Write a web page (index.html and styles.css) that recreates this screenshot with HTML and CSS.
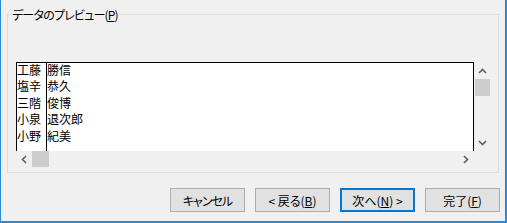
FILE: index.html
```html
<!DOCTYPE html>
<html lang="ja">
<head>
  <meta charset="UTF-8" />
  <title>テキスト ファイル ウィザード</title>
  <link rel="stylesheet" href="styles.css">
</head>
<body>
  <div class="wizard">
    <fieldset class="group">
      <legend>データのプレビュー(<u>P</u>)</legend>
      <div class="preview">
        <div class="preview-top">
          <div class="sheet">
            <div class="col first">
              <div>工藤</div>
              <div>塩辛</div>
              <div>三階</div>
              <div>小泉</div>
              <div>小野</div>
            </div>
            <div class="col second">
              <div>勝信</div>
              <div>恭久</div>
              <div>俊博</div>
              <div>退次郎</div>
              <div>紀美</div>
            </div>
          </div>
          <div class="vscroll">
            <div class="arrow">
              <svg width="9" height="6" viewBox="0 0 9 6"><polyline points="1,5 4.5,1.5 8,5" /></svg>
            </div>
            <div class="vthumb"></div>
            <div class="vtrack"></div>
            <div class="arrow">
              <svg width="9" height="6" viewBox="0 0 9 6"><polyline points="1,1 4.5,4.5 8,1" /></svg>
            </div>
          </div>
        </div>
        <div class="hscroll">
          <div class="arrow">
            <svg width="6" height="9" viewBox="0 0 6 9"><polyline points="5,1 1.5,4.5 5,8" /></svg>
          </div>
          <div class="hthumb"></div>
          <div class="htrack"></div>
          <div class="arrow">
            <svg width="6" height="9" viewBox="0 0 6 9"><polyline points="1,1 4.5,4.5 1,8" /></svg>
          </div>
          <div class="corner"></div>
        </div>
      </div>
    </fieldset>

    <div class="buttons">
      <button class="kana">キャンセル</button>
      <button>&lt;&nbsp;戻る(<u>B</u>)</button>
      <button class="default">次へ(<u>N</u>)&nbsp;&gt;</button>
      <button>完了(<u>F</u>)</button>
    </div>
  </div>
</body>
</html>
```

FILE: styles.css
```css
body {
  margin: 0;
  background-color: #f0f0f0;
  font-family: "Noto Sans CJK JP", "Noto Sans", sans-serif;
  font-size: 12px;
  color: #000;
}

.wizard {
  box-sizing: border-box;
  width: 507px;
  height: 223px;
  border-left: 1px solid #2a8ad4;
  border-right: 2px solid #2a8ad4;
  border-bottom: 2px solid #2a8ad4;
  overflow: hidden;
}

.group {
  box-sizing: border-box;
  width: 492px;
  margin: 6px 0 0 6px;
  padding: 0 0 5px 0;
  border: 1px solid #dcdcdc;
}

.group legend {
  margin-left: 3px;
  padding: 0 1px;
  line-height: 17px;
  letter-spacing: -0.8px;
  font-feature-settings: "palt";
}

.preview {
  margin: 39px 0 0 8px;
  width: 475px;
}

.preview-top {
  display: flex;
  height: 89px;
}

.sheet {
  box-sizing: border-box;
  width: 458px;
  display: flex;
  background-color: #fff;
  border: 1px solid #000;
  border-bottom: none;
}

.col {
  line-height: 16.4px;
}

.col div {
  white-space: nowrap;
}

.col > div:first-child {
  margin-top: -1px;
}

.col.first {
  width: 29px;
  border-right: 1px solid #000;
}

.col.second {
  flex: 1;
}

.vscroll {
  width: 17px;
  display: flex;
  flex-direction: column;
}

.vscroll .arrow {
  height: 17px;
}

.vthumb {
  height: 17px;
  margin: 0 1px;
  background-color: #cdcdcd;
}

.vtrack {
  flex: 1;
}

.hscroll {
  display: flex;
  height: 16px;
}

.hscroll .arrow {
  width: 16px;
}

.hthumb {
  width: 17px;
  background-color: #cdcdcd;
}

.htrack {
  flex: 1;
}

.corner {
  width: 17px;
}

.arrow {
  display: flex;
  justify-content: center;
  align-items: center;
}

.arrow svg polyline {
  fill: none;
  stroke: #606060;
  stroke-width: 1.6;
}

.buttons {
  display: flex;
  justify-content: flex-end;
  gap: 10px;
  margin-top: 15px;
  padding-right: 5px;
}

button {
  box-sizing: border-box;
  width: 75px;
  height: 24px;
  padding: 0;
  border: 1px solid #adadad;
  background-color: #e1e1e1;
  font-family: "Noto Sans CJK JP", "Noto Sans", sans-serif;
  font-size: 12px;
  color: #000;
  font-feature-settings: "palt";
}

button.kana {
  letter-spacing: -1px;
}

button.default {
  border: 2px solid #0078d7;
}
```
